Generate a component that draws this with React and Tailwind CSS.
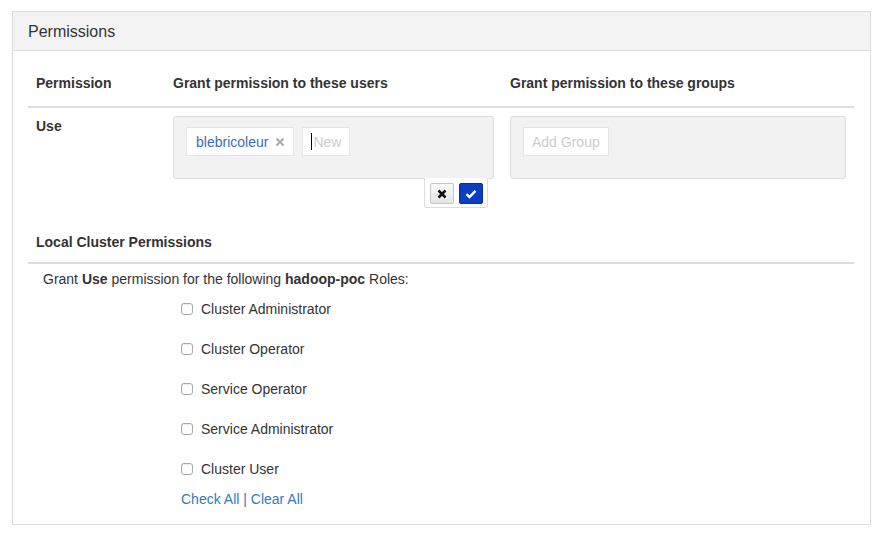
import React from 'react';

const roles = [
    'Cluster Administrator',
    'Cluster Operator',
    'Service Operator',
    'Service Administrator',
    'Cluster User',
];

const App = () => {
    return (
        <div className="min-h-screen bg-white pt-[11px] pl-[12px] pr-[3px] text-[14px] leading-[20px] text-[#333]" style={{ fontFamily: '"Liberation Sans", Arial, sans-serif' }}>
            <div className="w-[859px] border border-[#ddd] bg-white">
                {/* Panel heading */}
                <div className="h-[39px] bg-[#f3f3f3] border-b border-[#ddd] pl-[15px] pt-[2px] flex items-center text-[16px]">
                    Permissions
                </div>

                {/* Panel body */}
                <div className="pl-[15px] pr-[16px] pt-[14px] pb-[15px]">
                    {/* Table header */}
                    <div className="flex font-bold border-b-2 border-[#ddd] pt-2 pb-[13px]">
                        <div className="w-[137px] px-2">Permission</div>
                        <div className="w-[337px] px-2">Grant permission to these users</div>
                        <div className="flex-1 px-2">Grant permission to these groups</div>
                    </div>

                    {/* Use row */}
                    <div className="flex pt-2">
                        <div className="w-[137px] px-2 font-bold">Use</div>
                        <div className="w-[337px] px-2">
                            <div className="relative h-[63px] bg-[#f2f2f2] border border-[#ddd] rounded-[3px] pl-[12px] pt-[10px] flex items-start gap-2">
                                <div className="h-[29px] bg-white border border-[#e5e5e5] flex items-center pl-[9px] pr-[8px] gap-[7px]">
                                    <span className="text-[#3a6db5]">blebricoleur</span>
                                    <svg width="10" height="10" viewBox="0 0 10 10">
                                        <path d="M1.5 1.5 L8.5 8.5 M8.5 1.5 L1.5 8.5" stroke="#aaa" strokeWidth="2" />
                                    </svg>
                                </div>
                                <div className="h-[29px] w-[48px] bg-white border border-[#e5e5e5] flex items-center pl-[8px]">
                                    <span className="w-px h-[17px] bg-black mr-px" />
                                    <span className="text-[#ccc]">New</span>
                                </div>

                                {/* Editable buttons */}
                                <div className="absolute top-[61px] right-[5px] w-[64px] h-[30px] bg-white border border-t-0 border-[#ddd] rounded-b-[3px] flex items-center justify-center gap-[5px] pt-[2px]">
                                    <div className="w-[24px] h-[21px] rounded-[2px] border border-[#c5c5c5] bg-gradient-to-b from-[#fafafa] to-[#e6e6e6] flex items-center justify-center">
                                        <svg width="10" height="10" viewBox="0 0 10 10">
                                            <path d="M1.5 1.5 L8.5 8.5 M8.5 1.5 L1.5 8.5" stroke="#111" strokeWidth="2.6" />
                                        </svg>
                                    </div>
                                    <div className="w-[24px] h-[21px] rounded-[2px] bg-[#0a3fc4] border border-[#062f9a] flex items-center justify-center">
                                        <svg width="12" height="10" viewBox="0 0 12 10">
                                            <path d="M1.5 5.2 L4.5 8 L10.5 1.8" stroke="#fff" strokeWidth="2.4" fill="none" />
                                        </svg>
                                    </div>
                                </div>
                            </div>
                        </div>
                        <div className="flex-1 px-2">
                            <div className="h-[63px] bg-[#f2f2f2] border border-[#ddd] rounded-[3px] pl-[12px] pt-[10px] flex items-start">
                                <div className="h-[29px] bg-white border border-[#e5e5e5] flex items-center px-[8px] text-[#ccc]">
                                    Add Group
                                </div>
                            </div>
                        </div>
                    </div>

                    {/* Local Cluster Permissions */}
                    <div className="mt-[53px] font-bold px-2 pb-[10px] border-b-2 border-[#ddd]">
                        Local Cluster Permissions
                    </div>
                    <div className="pl-[15px] pt-[5px]">
                        Grant <b>Use</b> permission for the following <b>hadoop-poc</b> Roles:
                    </div>
                    <div className="pl-[153px] pt-[10px] flex flex-col gap-[20px]">
                        {roles.map((role) => (
                            <label key={role} className="flex items-center h-[20px]">
                                <input type="checkbox" className="appearance-none w-[12px] h-[12px] border border-[#a9a9a9] rounded-[3px] bg-white shadow-[inset_0_1px_1px_rgba(0,0,0,0.08)] mr-[8px]" />
                                {role}
                            </label>
                        ))}
                    </div>
                    <div className="pl-[153px] pt-[10px] text-[#337ab7]">
                        <a href="#">Check All</a> | <a href="#">Clear All</a>
                    </div>
                </div>
            </div>
        </div>
    );
};

export default App;
